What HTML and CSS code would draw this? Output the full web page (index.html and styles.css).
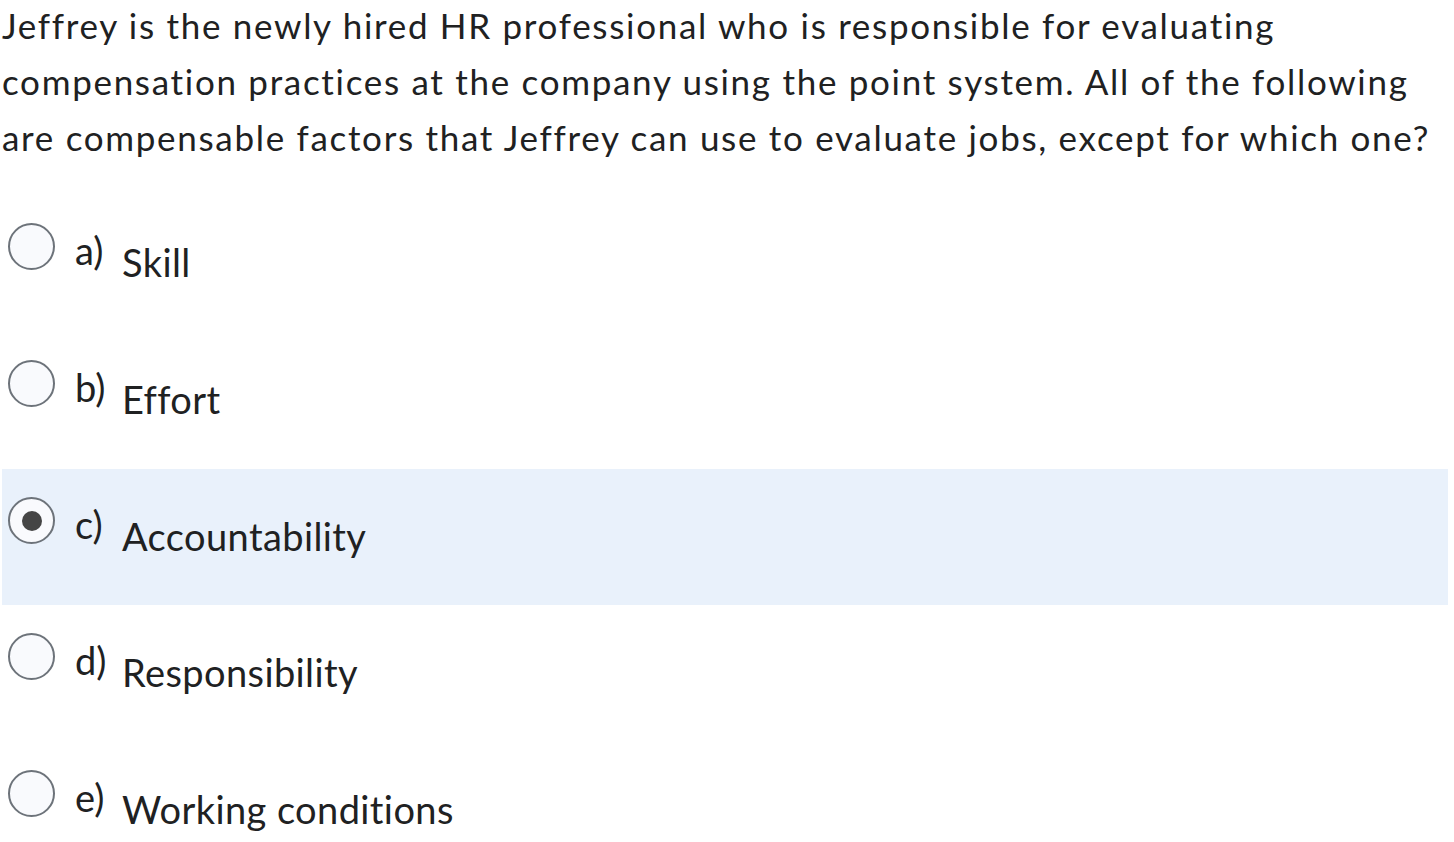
FILE: index.html
```html
<!DOCTYPE html>
<html>
<head>
<meta charset="utf-8">
<link rel="stylesheet" href="styles.css">
</head>
<body>
<div class="quiz">
  <p class="question">Jeffrey is the newly hired HR professional who is responsible for evaluating compensation practices at the company using the point system. All of the following are compensable factors that Jeffrey can use to evaluate jobs, except for which one?</p>
  <div class="options">
    <label class="option">
      <span class="radio"></span>
      <span class="letter">a)</span>
      <span class="text">Skill</span>
    </label>
    <label class="option">
      <span class="radio"></span>
      <span class="letter">b)</span>
      <span class="text">Effort</span>
    </label>
    <label class="option selected">
      <span class="radio"><span class="dot"></span></span>
      <span class="letter">c)</span>
      <span class="text">Accountability</span>
    </label>
    <label class="option">
      <span class="radio"></span>
      <span class="letter">d)</span>
      <span class="text">Responsibility</span>
    </label>
    <label class="option">
      <span class="radio"></span>
      <span class="letter">e)</span>
      <span class="text">Working conditions</span>
    </label>
  </div>
</div>
</body>
</html>
```
FILE: styles.css
```css
html, body {
  margin: 0;
  padding: 0;
  background: #ffffff;
}
body {
  font-family: Lato, "Liberation Sans", sans-serif;
  font-variant-ligatures: none;
  color: #202122;
  width: 1454px;
  height: 842px;
  overflow: hidden;
}
.quiz {
  padding: 0 6px 0 2px;
}
.question {
  margin: -3px 0 0 0;
  font-size: 35px;
  line-height: 56px;
  letter-spacing: 1.7px;
  width: 1446px;
}
.options {
  margin-top: 30px;
  display: flex;
  flex-direction: column;
}
.option {
  height: 137px;
  box-sizing: border-box;
  display: flex;
  align-items: flex-start;
  padding: 28px 0 0 6px;
}
.option.selected {
  background: #e9f1fb;
  height: 136px;
}
.radio {
  width: 47px;
  height: 47px;
  box-sizing: border-box;
  border: 2px solid #6d737a;
  border-radius: 50%;
  background: #f9fafd;
  display: flex;
  align-items: center;
  justify-content: center;
  flex: none;
}
.dot {
  width: 20px;
  height: 20px;
  border-radius: 50%;
  background: #454545;
}
.letter {
  font-size: 38px;
  line-height: 46px;
  margin: 4px 0 0 20px;
  width: 47px;
  flex: none;
}
.text {
  font-size: 38px;
  line-height: 46px;
  letter-spacing: 0.4px;
  margin-top: 16px;
}
```
